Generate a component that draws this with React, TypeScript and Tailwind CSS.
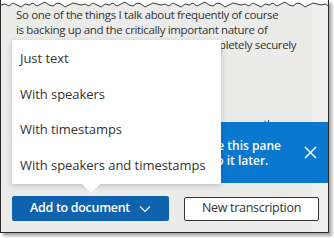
import React from "react";

function TornEdge() {
  const pts: [number, number][] = [];
  const ys = [5, 4, 6, 3, 5, 7, 4, 5, 3, 6, 4, 2, 5, 6, 3, 4, 7, 5, 3, 4];
  for (let i = 0, x = 0; x <= 334; i++, x += 4) {
    pts.push([x, ys[i % ys.length]]);
  }
  const line = pts.map((p) => `${p[0]},${p[1]}`).join(" ");
  const poly = `0,0 ${line} 334,0`;
  return (
    <svg className="absolute left-0 top-0" width="334" height="12" viewBox="0 0 334 12">
      <polygon points={poly} fill="#ffffff" />
      <polyline points={line} fill="none" stroke="#3a3a3a" strokeWidth="1" />
    </svg>
  );
}

export default function App() {
  return (
    <div className="relative w-[334px] h-[238px] bg-white overflow-hidden font-['Open_Sans',sans-serif]">
      <div className="relative w-[329px] h-[233px] border-l border-r border-b border-[#2a2a2a] bg-[#ebebea] shadow-[3px_3px_3px_rgba(0,0,0,0.35)] overflow-hidden">
        <div className="absolute right-0 top-0 bottom-0 w-[16px] bg-[#efefee]" />
        <div className="relative pl-[15px] pr-[20px] pt-[7px] text-[11.5px] tracking-[-0.35px] leading-[15px] text-[#333] whitespace-nowrap">
          <p>So one of the things I talk about frequently of course</p>
          <p>is backing up and the critically important nature of</p>
          <p>making sure your data is backed up completely securely</p>
          <p className="mt-[64px] pl-[228px]">another</p>
        </div>

        {/* notification banner */}
        <div className="absolute left-[11px] right-0 top-[122px] h-[61px] bg-[#0b78d0] flex items-center text-white">
          <div className="pl-[134px] text-[12px] leading-[15px] font-semibold whitespace-nowrap">
            <p>You can close this pane</p>
            <p>and return to it later.</p>
          </div>
          <div className="ml-auto mr-[11px]">
            <svg width="13" height="13" viewBox="0 0 13 13">
              <path d="M1 1 L12 12 M12 1 L1 12" stroke="#fff" strokeWidth="1.5" />
            </svg>
          </div>
        </div>

        {/* buttons */}
        <div className="absolute left-[11px] top-[196px] flex items-center gap-[15px]">
          <button className="w-[157px] h-[25px] bg-[#0f62ae] text-white text-[12.5px] tracking-[-0.3px] font-semibold flex items-center justify-center gap-[9px] rounded-[2px]">
            <span>Add to document</span>
            <svg width="12" height="8" viewBox="0 0 12 8">
              <path d="M1 1.5 L6 6.5 L11 1.5" fill="none" stroke="#fff" strokeWidth="1.1" />
            </svg>
          </button>
          <button className="w-[135px] h-[24px] bg-white border border-[#333] text-[#333] text-[12.5px] tracking-[-0.3px] flex items-center justify-center rounded-[2px]">
            New transcription
          </button>
        </div>

        {/* dropdown menu */}
        <div className="absolute left-[11px] top-[40px] w-[209px] h-[144px] bg-white shadow-[0_2px_6px_rgba(0,0,0,0.18)] flex flex-col text-[13px] tracking-[-0.05px] text-[#333] pt-[1px] whitespace-nowrap">
          <div className="h-[36px] flex items-center pl-[8px]">Just text</div>
          <div className="h-[37px] flex items-center pl-[8px]">With speakers</div>
          <div className="h-[36px] flex items-center pl-[8px]">With timestamps</div>
          <div className="h-[37px] flex items-center pl-[8px]">With speakers and timestamps</div>
          <svg className="absolute left-[59px] top-[143px]" width="40" height="12" viewBox="0 0 40 12">
            <path d="M10 0 L20 10 L30 0 Z" fill="#ffffff" />
          </svg>
        </div>

        <TornEdge />
      </div>
    </div>
  );
}
